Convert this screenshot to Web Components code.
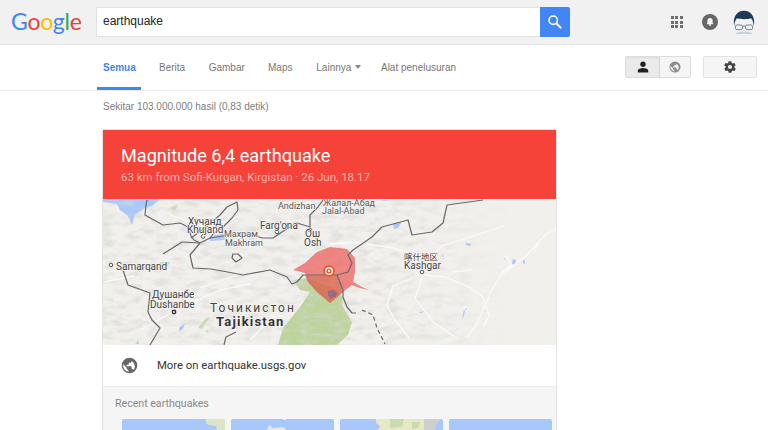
<!DOCTYPE html>
<html>
<head>
<meta charset="utf-8">
<style>
html, body { margin: 0; height: 430px; overflow: hidden; background: #fff; }
</style>
</head>
<body>
<search-page></search-page>
<script>
class TopBar extends HTMLElement {
    constructor() {
        super();
        this.attachShadow({ mode: 'open' }).innerHTML = `
            <style>
                :host { display: flex; align-items: center; height: 44px; background: #f1f1f1; border-bottom: 1px solid #e6e6e6; box-sizing: content-box; }
                .logo { width: 96px; padding-left: 11px; font: 400 23px/31px Lato, sans-serif; letter-spacing: -.3px; margin-top: -1px; box-sizing: border-box; flex: none; white-space: nowrap; }
                .b { color: #4285f4; } .r { color: #ea4335; } .y { color: #fbbc05; } .g { color: #34a853; }
                .search { display: flex; width: 474px; height: 30px; flex: none; }
                .input { flex: 1; background: #fff; border: 1px solid #e2e2e2; border-right: 0; box-sizing: border-box; padding-left: 6px; font: 12px/27px "Liberation Sans", Arial, sans-serif; color: #222; }
                .go { width: 30px; background: #4285f4; border-radius: 0 2px 2px 0; display: flex; align-items: center; justify-content: center; }
                .right { margin-left: auto; display: flex; align-items: center; padding-right: 13px; }
                .apps { display: grid; grid-template-columns: repeat(3, 3px); gap: 1.7px; margin-right: 19px; }
                .apps i { width: 3px; height: 3px; background: #6e6e6e; }
                .bell { margin-right: 15px; display: flex; }
                .me { display: flex; }
            </style>
            <div class="logo"><span class="b">G</span><span class="r">o</span><span class="y">o</span><span class="b">g</span><span class="g">l</span><span class="r">e</span></div>
            <div class="search">
                <div class="input">earthquake</div>
                <div class="go"><svg width="16" height="16" viewBox="0 0 18 18" fill="none" stroke="#fff" stroke-width="1.8"><circle cx="7" cy="7" r="4.7"/><path d="M10.5 10.5 L16 16" stroke-width="2.2"/></svg></div>
            </div>
            <div class="right">
                <div class="apps"><i></i><i></i><i></i><i></i><i></i><i></i><i></i><i></i><i></i></div>
                <div class="bell"><svg width="16" height="16" viewBox="0 0 16 16"><circle cx="8" cy="8" r="8" fill="#666"/><path d="M8 4a2.6 2.6 0 0 0-2.6 2.6v2.2l-1 1.4h7.2l-1-1.4V6.6A2.6 2.6 0 0 0 8 4z" fill="#f4f4f4"/><circle cx="8" cy="11" r="1" fill="#f4f4f4"/></svg></div>
                <div class="me"><svg width="22" height="24" viewBox="0 0 22 24"><path d="M3 13C3 8 4 6 11 6s8 2 8 7v5c0 3-4 5.5-8 5.5S3 21 3 18z" fill="#f1f3f5"/><path d="M1.2 16C-.5 7 4 .8 11 .8S22.5 7 20.8 16C20.3 12 19.5 9.500 18 8.300 14.500 9.500 7.500 9.500 4 8.300 2.500 9.500 1.700 12 1.200 16z" fill="#1e3a56"/><path d="M3 23c2-1 4-1.500 8-1.500s6 .5 8 1.500v1H3z" fill="#c8d2da"/><g fill="none" stroke="#76808a" stroke-width="1"><rect x="2.4" y="15" width="7" height="4.6" rx="1.5"/><rect x="12.6" y="15" width="7" height="4.6" rx="1.5"/><path d="M9.4 16.2h3.2"/></g></svg></div>
            </div>`;
    }
}

class NavTab extends HTMLElement {
    constructor() {
        super();
        this.attachShadow({ mode: 'open' }).innerHTML = `
            <style>
                :host { display: block; height: 45px; box-sizing: border-box; padding: 16px 0 0 0; font: 10px/13px "Liberation Sans", Arial, sans-serif; color: #777; white-space: nowrap; }
                :host([active]) { color: #4285f4; font-weight: 700; border-bottom: 3px solid #4285f4; padding-left: 6.5px; margin-left: -6.5px; }
            </style>
            <slot></slot>`;
    }
}

class NavBar extends HTMLElement {
    constructor() {
        super();
        this.attachShadow({ mode: 'open' }).innerHTML = `
            <style>
                :host { display: flex; height: 46px; box-sizing: border-box; border-bottom: 1px solid #ebebeb; padding-left: 103px; }
                .tabs { display: flex; }
                .caret { display: inline-block; width: 0; height: 0; border: 3px solid transparent; border-top: 4px solid #888; border-bottom: 0; margin: 0 0 2px 4px; vertical-align: middle; }
                .tools { margin-left: auto; display: flex; gap: 12px; padding: 11px 11px 0 0; }
                .seg { display: flex; height: 22px; width: 66px; border: 1px solid #dcdcdc; border-radius: 2px; box-sizing: border-box; background: #f5f5f5; }
                .seg div { display: flex; align-items: center; justify-content: center; }
                .on { width: 33px; background: #eaeaea; border-right: 1px solid #d8d8d8; box-shadow: inset 0 1px 2px #ddd; }
                .off { flex: 1; }
                .gear { width: 54px; height: 22px; box-sizing: border-box; border: 1px solid #e2e2e2; border-radius: 2px; background: #f5f5f5; display: flex; align-items: center; justify-content: center; }
            </style>
            <div class="tabs">
                <nav-tab active style="width:44.5px">Semua</nav-tab>
                <nav-tab style="margin-left:18px;width:32px">Berita</nav-tab>
                <nav-tab style="margin-left:17.7px;width:41px">Gambar</nav-tab>
                <nav-tab style="margin-left:18.3px;width:30px">Maps</nav-tab>
                <nav-tab style="margin-left:18.3px;width:46px">Lainnya<span class="caret"></span></nav-tab>
                <nav-tab style="margin-left:18.7px">Alat penelusuran</nav-tab>
            </div>
            <div class="tools">
                <div class="seg">
                    <div class="on"><svg width="12" height="12" viewBox="0 0 12 12" fill="#222"><circle cx="6" cy="3.2" r="2.7"/><path d="M.8 11.5V9.6C.8 8 3.6 7 6 7s5.2 1 5.2 2.6v1.900z"/></svg></div>
                    <div class="off"><svg width="12" height="12" viewBox="0 0 24 24"><path fill="#8d8d8d" d="M12 1a11 11 0 1 0 0 22 11 11 0 0 0 0-22zM11 20.9A9 9 0 0 1 3.2 10L8 15v1c0 1.1.9 2 2 2zM17.9 18.4A2 2 0 0 0 16 17h-1v-3c0-.6-.4-1-1-1H8v-2h2c.6 0 1-.4 1-1V8h2c1.1 0 2-.9 2-2v-.4a9 9 0 0 1 2.9 12.8z"/></svg></div>
                </div>
                <div class="gear"><svg width="14" height="14" viewBox="0 0 24 24"><path fill="#444" d="M19.4 13c.1-.3.1-.7.1-1s0-.7-.1-1l2.1-1.6c.2-.2.2-.4.1-.6l-2-3.5c-.1-.2-.4-.3-.6-.2l-2.5 1c-.5-.4-1.100-.7-1.700-1l-.4-2.600c0-.3-.2-.5-.5-.5h-4c-.3 0-.5.2-.5.4l-.4 2.700c-.6.2-1.100.6-1.700 1l-2.500-1c-.2-.1-.5 0-.6.2l-2 3.500c-.1.2-.1.4.1.6L4.600 11c0 .3-.1.7-.1 1s0 .7.1 1l-2.100 1.600c-.2.2-.2.4-.1.6l2 3.500c.1.2.4.3.6.2l2.500-1c.5.4 1.100.7 1.700 1l.4 2.600c0 .3.2.5.5.5h4c.3 0 .5-.2.5-.4l.4-2.700c.6-.2 1.100-.6 1.700-1l2.500 1c.2.1.5 0 .6-.2l2-3.500c.1-.2.1-.4-.1-.6zM12 15.500a3.500 3.500 0 1 1 0-7 3.500 3.500 0 0 1 0 7z"/></svg></div>
            </div>`;
    }
}

class QuakeMap extends HTMLElement {
    constructor() {
        super();
        this.attachShadow({ mode: 'open' }).innerHTML = `
            <style>
                :host { display: block; height: 146px; overflow: hidden; background: #f2f0ed; }
                svg { display: block; }
                .l { font: 9px Roboto, sans-serif; fill: #555; stroke: #f6f5f3; stroke-width: 1.5px; paint-order: stroke; stroke-linejoin: round; }
                .m { font-size: 10px; fill: #444; }
                .cjk { font: 8.5px "Noto Sans CJK SC", sans-serif; fill: #444; }
                .big { font-size: 12px; letter-spacing: 2px; fill: #444; }
                .bold { font-size: 13px; font-weight: 700; letter-spacing: 1.2px; fill: #333; }
            </style>
            <svg width="453" height="146" viewBox="103 199 453 146">
                <defs>
                    <filter id="tiny"><feGaussianBlur stdDeviation=".35"/></filter>
                    <filter id="relief" x="0" y="0" width="100%" height="100%">
                        <feTurbulence type="fractalNoise" baseFrequency=".07 .15" numOctaves="3" seed="11"/>
                        <feColorMatrix values="0 0 0 0 .68  0 0 0 0 .68  0 0 0 0 .66  2.4 0 0 0 -1.05"/>
                        <feGaussianBlur stdDeviation=".45"/>
                    </filter>
                    <linearGradient id="fade" x1="0" x2="1" y1="0" y2="0">
                        <stop offset="0" stop-color="#bbb"/><stop offset=".6" stop-color="#bbb"/><stop offset=".76" stop-color="#666"/><stop offset=".9" stop-color="#000"/>
                    </linearGradient>
                    <mask id="fadeMask"><rect x="103" y="199" width="453" height="146" fill="url(#fade)"/></mask>
                </defs>
                <g fill="#a8c7fa">
                    <path d="M103 202L117 204L120 210L128 216L132 225L135 215L145 208L152 206L160 199H103Z"/>
                    <path d="M209 238L215 235L223 234L226 232L228 237L224 240L210 241Z"/>
                    <path d="M393 224l5-2 3 1-3 5-4 1zM466 243l5 1-1 2-4-1zM513 259l3 1-1 5-3-1zM523 260l2 1v3l-2-1zM504 258l1 1-1 1zM442 255l2 1-2 1zM427 311l-8 1 1 1zM466 308l1 1-2 1zM464 310l-2 8 1 0 2-7zM460 327l-14 10-2 1 14-9z"/>
                    <path d="M185 323l-6 5 0 3 4-2zM380 200l10 0-6 1zM138 340l-2 4h3z"/>
                </g>
                <path d="M293 280L307 278L337 290L343 298L342 305L352 322L348 335L337 345H278L283 328L300 307L310 292L300 290Z" fill="#bdd49d" filter="url(#tiny)"/>
                <path d="M160 262h10l-2 4-7 0zM161 258h0zM170 208l8-4-3 7zM198 328l8-10 4-1-8 12zM205 330l4 1-2 2z" fill="#c9dcb0"/>
                <g mask="url(#fadeMask)"><rect x="103" y="199" width="453" height="146" filter="url(#relief)"/></g>
                <g fill="none" stroke="#fbfaf8" stroke-width="1.3">
                    <path d="M413 278l-20 8-6 20 8 14 14 18M425 275l20 2 24 10 14 10 6 18-6 12M423 276l-8 22 18 24 22 15M489 295l12-20 26-20 18-20 11-6M489 297l-14 30-8 10M506 255l5 10-10 8M540 240l-6 12M452 272l20-2"/>
                    <path d="M330 244l24-2 40 6 34 12 14-14 32-10 30-10M200 288l40-14M140 330l40-22 40-18 30-6M250 340l30-30M104 282l30-6M170 215l30 10 30-4"/>
                </g>
                <path d="M293 270L305 263L317 252L330 247L347 249L355 258L355 272L353 282L368 290L360 288L352 285L343 292L330 303L317 292L308 282L305 273Z" fill="#ec5250" fill-opacity=".68" filter="url(#tiny)"/>
                <path d="M308 282L305 276L337 276L343 292L330 303L317 292Z" fill="#c8714a" fill-opacity=".45" filter="url(#tiny)"/>
                <path d="M328 291L334 290L337 293L336 297L333 297L331 299L328 296Z" fill="#93668f" fill-opacity=".85" filter="url(#tiny)"/>
                <g fill="none" stroke="#686868" stroke-width="1.2" stroke-linejoin="round" filter="url(#tiny)">
                    <path d="M147 200L146 205L145 215L152 219L163 225L172 224L180 223L188 227L191 236L194 240L200 243"/>
                    <path d="M191 238L205 228L220 215L227 207L237 202L238 210L232 218L223 227L213 234L210 238L230 235L253 235L262 238L273 238L285 230L297 223L310 227L310 215L318 207L323 200"/>
                    <path d="M182 242L200 243L210 238M200 243L190 255L193 268L211 269L233 273L243 275L270 270L287 277L292 284L297 282L303 275L337 275L348 272L352 263L348 255L353 250L372 237L382 227L408 220L412 235L432 232L443 223L447 205L483 200"/>
                    <path d="M182 242L163 254"/>
                    <path d="M123 270L128 285L150 293L148 312L152 320L160 328L150 345"/>
                    <path d="M337 275L343 290L343 297L347 307L352 313H356"/>
                    <path d="M362 310L373 315L377 328L385 344" stroke-dasharray="4 3"/>
                    <path d="M224 345L226 337L236 332M233 254L238 254L242 258L236 262L232 258Z"/>
                </g>
                <circle cx="329" cy="271" r="5.8" fill="#f4511e"/><circle cx="329" cy="271" r="4" fill="#fff"/><circle cx="329" cy="271" r="2.6" fill="#f4511e"/><circle cx="329" cy="271" r="1.2" fill="#fff"/>
                <g fill="#fff" stroke="#555" stroke-width="1">
                    <circle cx="203" cy="236.5" r="1.8"/><circle cx="277" cy="232" r="1.8"/><circle cx="310" cy="230" r="1.8"/><circle cx="111" cy="265" r="1.8"/><circle cx="422" cy="272" r="1.8"/>
                </g>
                <circle cx="174" cy="312" r="2.4" fill="#333"/><circle cx="174" cy="312" r=".9" fill="#fff"/>
                <text class="l m" x="188" y="224.5">Хучанд</text>
                <text class="l m" x="187" y="233">Khujand</text>
                <text class="l" x="224" y="237">Махрам</text>
                <text class="l" x="225" y="245.5">Makhram</text>
                <text class="l m" x="260" y="228.5">Farg'ona</text>
                <text class="l m" x="305" y="236.5">Ош</text>
                <text class="l m" x="304" y="245.5">Osh</text>
                <text class="l" x="278" y="209">Andizhan</text>
                <text class="l" x="323" y="205.5">Жалал-Абад</text>
                <text class="l" x="322" y="213.5">Jalal-Abad</text>
                <text class="l m" x="116" y="269.5">Samarqand</text>
                <text class="l m" x="152" y="298">Душанбе</text>
                <text class="l m" x="150" y="308">Dushanbe</text>
                <text class="l big" x="210" y="312">Точикистон</text>
                <text class="l bold" x="216" y="325.5">Tajikistan</text>
                <text class="l cjk" x="404" y="260">喀什地区</text>
                <text class="l m" x="404" y="268.5">Kashgar</text>
            </svg>`;
    }
}

class ThumbStrip extends HTMLElement {
    constructor() {
        super();
        this.attachShadow({ mode: 'open' }).innerHTML = `
            <style>
                :host { display: grid; grid-template-columns: repeat(4, 103px); gap: 6px; height: 11px; }
                div { background: #a8c7fa; border-radius: 2px 2px 0 0; height: 11px; overflow: hidden; }
                svg { display: block; }
            </style>
            <div><svg width="103" height="11"><path d="M84 0h19v11h-8l-1-4-7-1-3-2z" fill="#dbe6c6"/></svg></div>
            <div><svg width="103" height="11"><path d="M36 11l2-5 4 3 10-1 4 3z" fill="#e6e6e2"/><path d="M52 0h3v1h-3z" fill="#eef0ea"/></svg></div>
            <div><svg width="103" height="11"><path d="M36 0h64l-4 6-2 5H38l2-4-4-3z" fill="#e6e8c6"/><path d="M50 0h14l-2 8-12 1zM72 3h8l-2 6-6 1z" fill="#c9dcb0"/><path d="M84 0h16l-4 6-2 5h-10z" fill="#cfcfcb"/></svg></div>
            <div></div>`;
    }
}

class QuakeCard extends HTMLElement {
    constructor() {
        super();
        this.attachShadow({ mode: 'open' }).innerHTML = `
            <style>
                :host { display: block; width: 455px; box-sizing: border-box; margin-left: 102px; border: 1px solid #e4e4e4; border-bottom: 0; border-radius: 2px 2px 0 0; }
                .head { height: 69px; box-sizing: border-box; background: #f6433a; padding: 15px 0 0 18px; font-family: Roboto, sans-serif; }
                .title { font-size: 18.1px; line-height: 22px; color: #fff; }
                .sub { font-size: 11.5px; line-height: 15px; margin-top: 3px; color: #fdb0aa; }
                .link { display: flex; align-items: center; height: 41px; background: #fff; padding-left: 18px; font: 11.3px Roboto, sans-serif; color: #333; border-bottom: 1px solid #ededed; }
                .link svg { margin-right: 19px; }
                .recent { background: #f5f5f5; height: 60px; padding: 10px 0 0 12px; box-sizing: border-box; font: 10.6px/14px Roboto, sans-serif; color: #888; }
                thumb-strip { margin: 8px 0 0 7px; }
            </style>
            <div class="head">
                <div class="title">Magnitude 6,4 earthquake</div>
                <div class="sub">63 km from Sofi-Kurgan, Kirgistan · 26 Jun, 18.17</div>
            </div>
            <quake-map></quake-map>
            <div class="link">
                <svg width="17" height="17" viewBox="0 0 24 24"><path fill="#666" d="M12 1a11 11 0 1 0 0 22 11 11 0 0 0 0-22zM11 20.9A9 9 0 0 1 3.2 10L8 15v1c0 1.1.9 2 2 2zM17.9 18.4A2 2 0 0 0 16 17h-1v-3c0-.6-.4-1-1-1H8v-2h2c.6 0 1-.4 1-1V8h2c1.1 0 2-.9 2-2v-.4a9 9 0 0 1 2.9 12.8z"/></svg>
                <span>More on earthquake.usgs.gov</span>
            </div>
            <div class="recent">
                Recent earthquakes
                <thumb-strip></thumb-strip>
            </div>`;
    }
}

class SearchPage extends HTMLElement {
    constructor() {
        super();
        this.attachShadow({ mode: 'open' }).innerHTML = `
            <style>
                :host { display: block; }
                .stats { font: 10px/13px "Liberation Sans", Arial, sans-serif; color: #808080; padding: 9px 0 0 103px; height: 38px; box-sizing: border-box; }
            </style>
            <top-bar></top-bar>
            <nav-bar></nav-bar>
            <div class="stats">Sekitar 103.000.000 hasil (0,83 detik)</div>
            <quake-card></quake-card>`;
    }
}

customElements.define('nav-tab', NavTab);
customElements.define('top-bar', TopBar);
customElements.define('nav-bar', NavBar);
customElements.define('quake-map', QuakeMap);
customElements.define('thumb-strip', ThumbStrip);
customElements.define('quake-card', QuakeCard);
customElements.define('search-page', SearchPage);
</script>
</body>
</html>
